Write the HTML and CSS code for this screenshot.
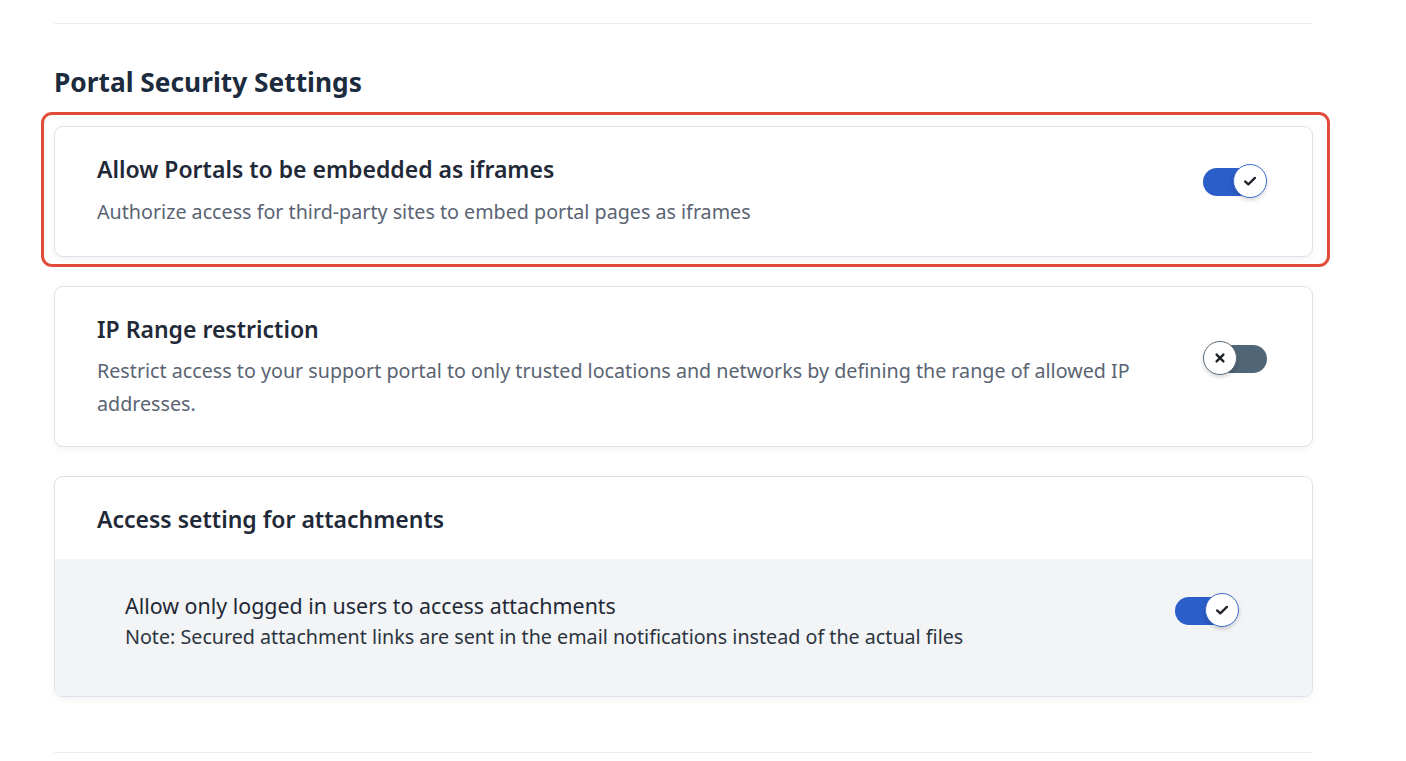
FILE: index.html
```html
<!DOCTYPE html>
<html lang="en">
<head>
<meta charset="utf-8">
<title>Portal Security Settings</title>
<link rel="stylesheet" href="styles.css">
</head>
<body>
<main class="page">
  <hr class="divider">
  <h2 class="section-title">Portal Security Settings</h2>

  <div class="card-list">
    <div class="card highlighted">
      <div class="card-row">
        <div class="card-text">
          <h3 class="card-title">Allow Portals to be embedded as iframes</h3>
          <p class="card-desc">Authorize access for third-party sites to embed portal pages as iframes</p>
        </div>
        <div class="toggle on" role="switch" aria-checked="true">
          <span class="knob">
            <svg viewBox="0 0 16 16" width="18" height="18"><path d="M3.6 8.4 6.5 11 12.4 5.2" fill="none" stroke="#1f2328" stroke-width="2" stroke-linecap="round" stroke-linejoin="round"/></svg>
          </span>
        </div>
      </div>
      <span class="annotation"></span>
    </div>

    <div class="card ip-card">
      <div class="card-row">
        <div class="card-text">
          <h3 class="card-title">IP Range restriction</h3>
          <p class="card-desc">Restrict access to your support portal to only trusted locations and networks by defining the range of allowed IP addresses.</p>
        </div>
        <div class="toggle off" role="switch" aria-checked="false">
          <span class="knob">
            <svg viewBox="0 0 16 16" width="16" height="16"><path d="M4.6 4.6 11.4 11.4M11.4 4.6 4.6 11.4" fill="none" stroke="#1f2328" stroke-width="2.4" stroke-linecap="round"/></svg>
          </span>
        </div>
      </div>
    </div>

    <div class="card">
      <div class="card-head">
        <h3 class="card-title">Access setting for attachments</h3>
      </div>
      <div class="card-sub">
        <div class="sub-text">
          <p class="sub-title">Allow only logged in users to access attachments</p>
          <p class="sub-note">Note: Secured attachment links are sent in the email notifications instead of the actual files</p>
        </div>
        <div class="toggle on" role="switch" aria-checked="true">
          <span class="knob">
            <svg viewBox="0 0 16 16" width="18" height="18"><path d="M3.6 8.4 6.5 11 12.4 5.2" fill="none" stroke="#1f2328" stroke-width="2" stroke-linecap="round" stroke-linejoin="round"/></svg>
          </span>
        </div>
      </div>
    </div>
  </div>

  <hr class="divider bottom">
</main>
</body>
</html>
```

FILE: styles.css
```css
* { box-sizing: border-box; }

html, body {
  margin: 0;
  padding: 0;
  background: #ffffff;
}

body {
  font-family: "Noto Sans", "Open Sans", "Liberation Sans", sans-serif;
  color: #1f2a37;
}

.page {
  width: 1259px;
  margin-left: 54px;
  padding-top: 23px;
}

.divider {
  margin: 0;
  border: 0;
  border-top: 1px solid #eceef1;
  height: 0;
}

.divider.bottom {
  margin-top: 55px;
}

.section-title {
  margin: 41px 0 0;
  font-size: 26.3px;
  line-height: 34px;
  font-weight: 700;
  color: #1c2b3d;
}

.card-list {
  margin-top: 27px;
  display: flex;
  flex-direction: column;
  gap: 29px;
}

.card {
  position: relative;
  border: 1px solid #dce2ea;
  border-radius: 9px;
  background: #fff;
  box-shadow: 0 3px 6px rgba(30, 50, 80, 0.05);
}

.card-row {
  display: flex;
  align-items: flex-start;
  justify-content: space-between;
  padding: 27px 45px 28px 42px;
  gap: 50px;
}

.card-text {
  flex: 1;
  min-width: 0;
}

.card-title {
  margin: 0;
  font-size: 23px;
  line-height: 30px;
  font-weight: 600;
  color: #1f2937;
}

.card-desc {
  margin: 11px 0 0;
  font-size: 19.7px;
  line-height: 33px;
  color: #5a6473;
}

.card-row .toggle {
  margin-top: 10px;
}

.ip-card .card-row {
  padding-bottom: 26px;
}

.ip-card .card-desc {
  margin-top: 10px;
}

.ip-card .card-row .toggle {
  margin-top: 27px;
}

.annotation {
  position: absolute;
  top: -15px;
  left: -14px;
  right: -18px;
  bottom: -11px;
  border: 3px solid #e04b3a;
  border-radius: 11px;
  pointer-events: none;
}

.card-head {
  padding: 27px 42px 25px;
}

.card-sub {
  background: #f3f4f6;
  border-radius: 0 0 9px 9px;
  display: flex;
  align-items: flex-start;
  justify-content: space-between;
  padding: 32px 73px 46px 70px;
}

.sub-title {
  margin: 0;
  font-size: 21.4px;
  line-height: 30px;
  font-weight: 400;
  color: #1f2937;
}

.sub-note {
  margin: 3px 0 0;
  font-size: 19.7px;
  line-height: 26px;
  color: #2b3441;
}

.card-sub .toggle {
  margin-top: 2px;
}

.toggle {
  position: relative;
  flex: none;
  width: 64px;
  height: 34px;
  display: flex;
  align-items: center;
}

.toggle::before {
  content: "";
  position: absolute;
  top: 4px;
  bottom: 2px;
  left: 0;
  right: 2px;
  border-radius: 14px;
}

.toggle.on::before { background: #2b5ec8; }
.toggle.off::before { background: #506575; left: 2px; right: 0; }

.knob {
  position: relative;
  width: 34px;
  height: 34px;
  border-radius: 50%;
  background: #fff;
  display: flex;
  align-items: center;
  justify-content: center;
  box-shadow: 0 2px 4px rgba(0, 0, 0, 0.18);
}

.toggle.on .knob {
  margin-left: auto;
  border: 1.5px solid #3e6fd1;
}

.toggle.off .knob {
  border: 1.5px solid #5c6f7e;
}
```
